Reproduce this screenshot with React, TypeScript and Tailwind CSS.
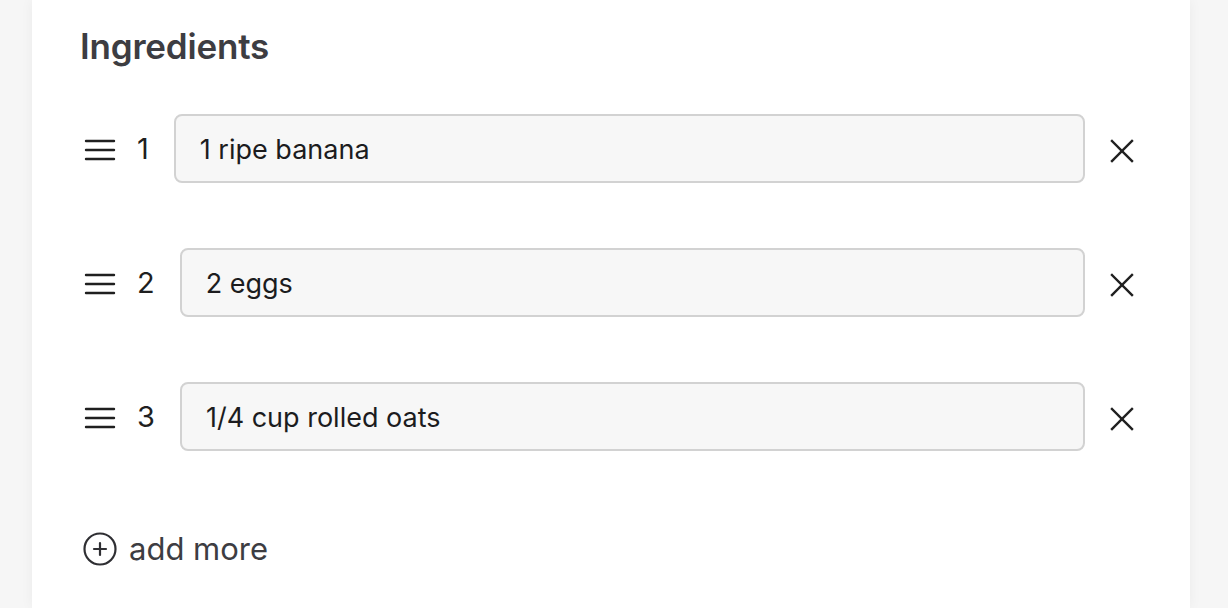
import { useState } from "react";

const MenuIcon = () => (
    <svg width="32" height="22" viewBox="0 0 32 22" fill="none" stroke="#1f1f1f" strokeWidth="2.4" strokeLinecap="round">
        <line x1="2" y1="2" x2="30" y2="2" />
        <line x1="2" y1="11" x2="30" y2="11" />
        <line x1="2" y1="20" x2="30" y2="20" />
    </svg>
);

const CloseIcon = () => (
    <svg width="24" height="24" viewBox="0 0 24 24" fill="none" stroke="#1f1f1f" strokeWidth="2.4" strokeLinecap="square">
        <line x1="2" y1="2" x2="22" y2="22" />
        <line x1="22" y1="2" x2="2" y2="22" />
    </svg>
);

const PlusCircleIcon = () => (
    <svg width="34" height="34" viewBox="0 0 34 34" fill="none" stroke="#2f2f33" strokeWidth="2.2" strokeLinecap="round">
        <circle cx="17" cy="17" r="15.5" />
        <line x1="17" y1="11" x2="17" y2="23" />
        <line x1="11" y1="17" x2="23" y2="17" />
    </svg>
);

const App = () => {
    const [items, setItems] = useState(["1 ripe banana", "2 eggs", "1/4 cup rolled oats"]);

    const handleChange = (index: number, value: string) => {
        setItems(items.map((item, i) => (i === index ? value : item)));
    }

    const handleRemove = (index: number) => {
        setItems(items.filter((_, i) => i !== index));
    }

    return (
        <div className="min-h-[608px] bg-[#f6f6f6] font-['Inter',sans-serif]">
            <div className="ml-8 w-[1158px] min-h-[608px] bg-white shadow-[0_0_12px_rgba(0,0,0,0.05)] pl-12 pr-14 pt-[25px]">
                <h2 className="text-[35px] leading-[42px] font-semibold text-[#3d3d42] tracking-[-0.2px]">Ingredients</h2>

                <div className="mt-[47px] flex flex-col gap-[65px]">
                    {items.map((item, i) => (
                        <div key={i} className="flex items-center">
                            <div className="ml-1 mt-[2px]"><MenuIcon /></div>
                            <span className="ml-[21px] mt-[1px] text-[29px] text-[#1f1f1f]">{i + 1}</span>
                            <input
                                type="text"
                                value={item}
                                onChange={(e) => handleChange(i, e.target.value)}
                                className="ml-[25px] flex-1 h-[69px] rounded-lg border-2 border-[#d2d2d2] bg-[#f7f7f7] px-6 pt-[2px] text-[27px] text-[#1c1c1e] focus:outline-none"
                            />
                            <button onClick={() => handleRemove(i)} className="ml-[25px] mt-1 flex items-center justify-center">
                                <CloseIcon />
                            </button>
                        </div>
                    ))}
                </div>

                <button className="mt-[75px] flex items-center gap-3 text-[31px] text-[#3d3d42]">
                    <span className="ml-[3px]"><PlusCircleIcon /></span>
                    add more
                </button>
            </div>
        </div>
    );
}

export default App;
